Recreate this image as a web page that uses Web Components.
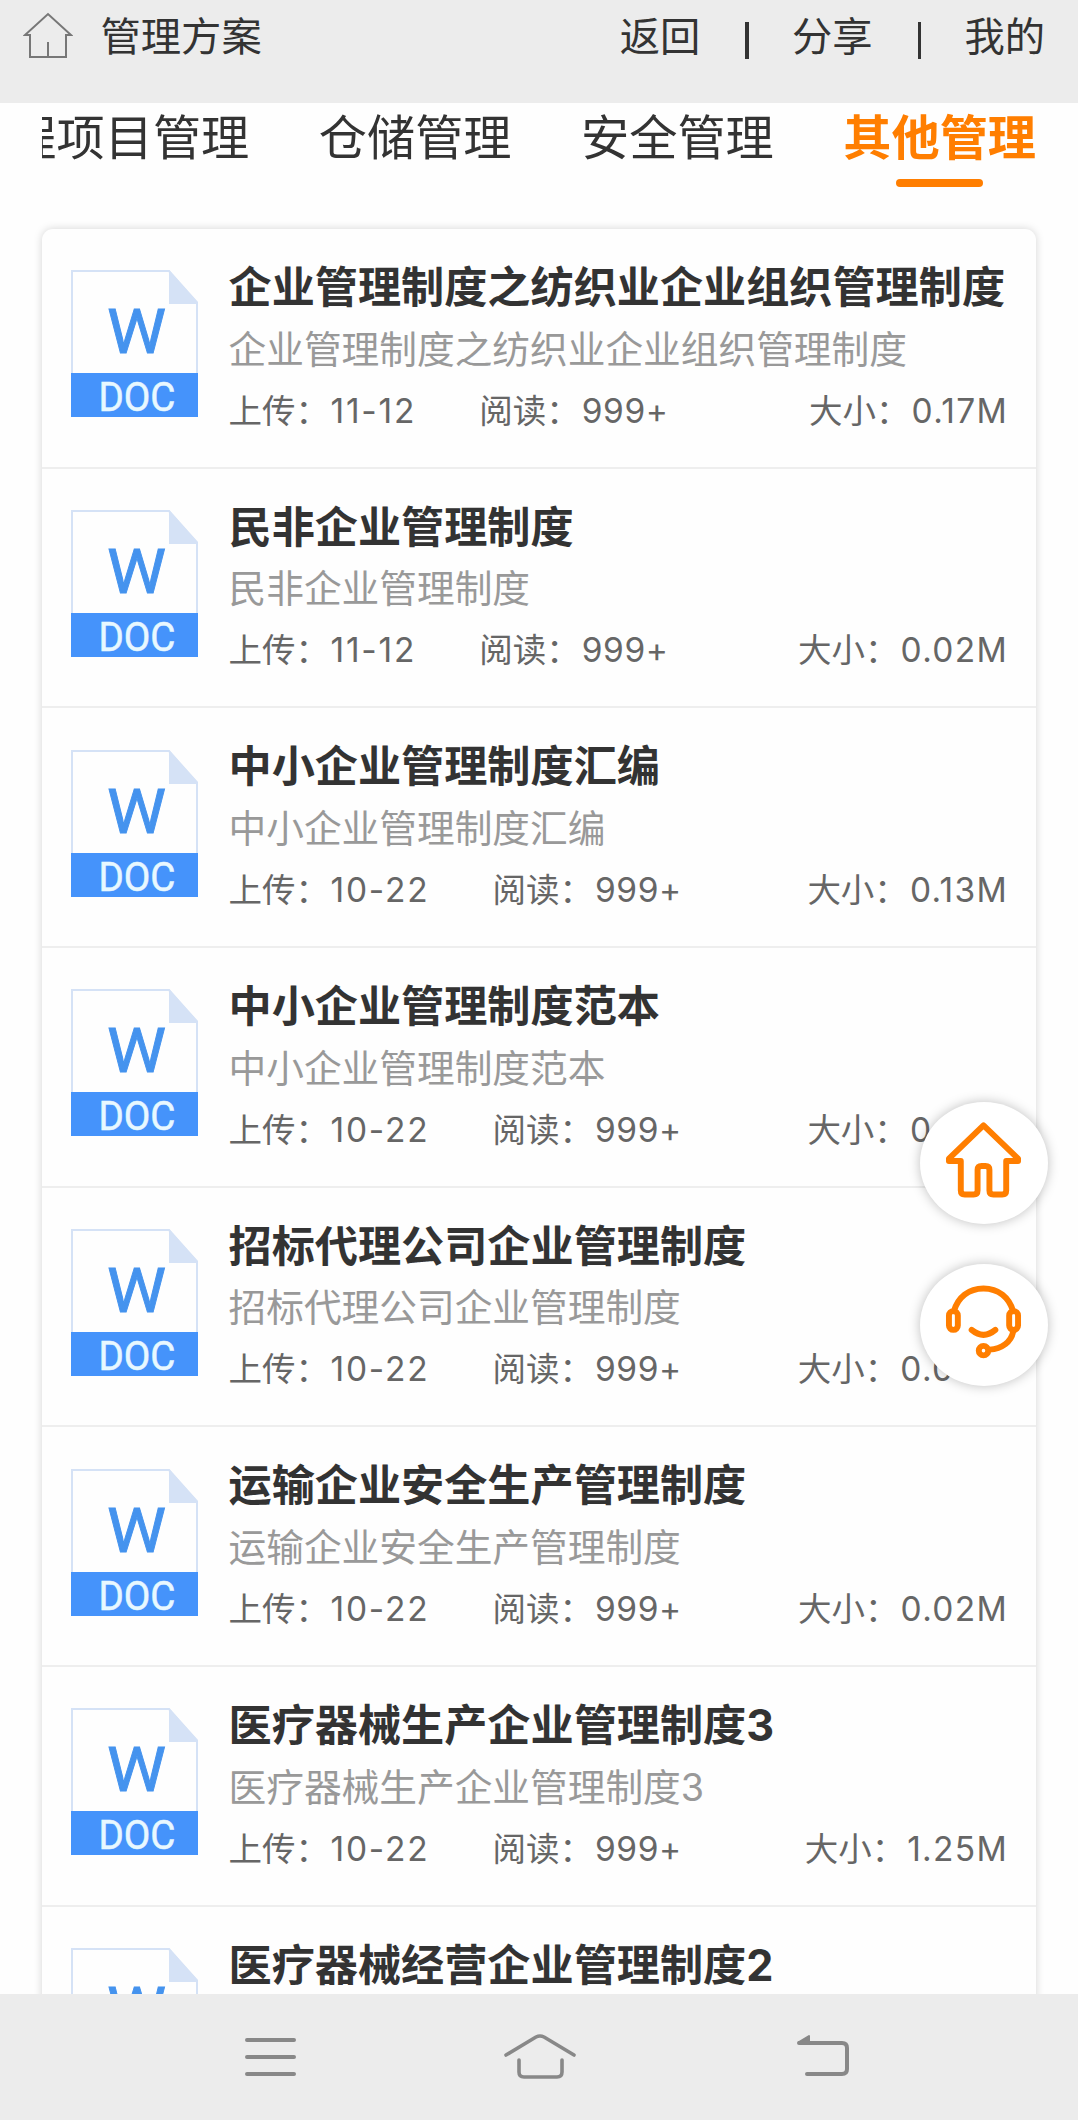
<!DOCTYPE html>
<html lang="zh-CN">
<head>
<meta charset="utf-8">
<title>管理方案</title>
<style>
  html, body {
    margin: 0;
    height: 100%;
    overflow: hidden;
    background: #fefefe;
    color: #333;
    font-family: Inter, "Noto Sans CJK SC", sans-serif;
  }
</style>
</head>
<body>
<doc-app></doc-app>

<script>
const docs = [
  { title: '企业管理制度之纺织业企业组织管理制度', date: '11-12', size: '0.17M' },
  { title: '民非企业管理制度', date: '11-12', size: '0.02M' },
  { title: '中小企业管理制度汇编', date: '10-22', size: '0.13M' },
  { title: '中小企业管理制度范本', date: '10-22', size: '0.13M' },
  { title: '招标代理公司企业管理制度', date: '10-22', size: '0.03M' },
  { title: '运输企业安全生产管理制度', date: '10-22', size: '0.02M' },
  { title: '医疗器械生产企业管理制度3', date: '10-22', size: '1.25M' },
  { title: '医疗器械经营企业管理制度2' },
];

// attach an open shadow root filled with markup
function define(name, html, setup) {
  const template = document.createElement('template');
  template.innerHTML = html;

  window.customElements.define(
    name,
    class extends HTMLElement {
      constructor() {
        super();
        this.attachShadow({ mode: 'open' });
        this.shadowRoot.appendChild(template.content.cloneNode(true));
      }

      connectedCallback() {
        if (setup) setup(this, this.shadowRoot);
      }
    }
  );
}

define('top-bar', `
  <style>
    :host {
      display: flex;
      flex: none;
      box-sizing: border-box;
      height: 103px;
      padding: 0 33px 30px 23px;
      align-items: center;
      background: #ececec;
      font-size: 40.3px;
      line-height: 72px;
    }
    svg { flex: none; margin: 0 27.5px 2px 0; }
    .title { flex: 1; }
    nav { display: flex; align-items: center; }
    i { width: 3.5px; height: 37px; margin: 7px 43.3px 0 45px; background: #333; }
  </style>
  <svg width="50" height="48" viewBox="0 0 50 48" fill="none" stroke="#777" stroke-width="2">
    <path d="M7 23H2L25 2l23 21h-5v22H7zM25 30v15"/>
  </svg>
  <span class="title"><slot></slot></span>
  <nav><span>返回</span><i></i><span>分享</span><i></i><span>我的</span></nav>
`);

define('tab-item', `
  <style>
    :host {
      position: relative;
      flex: none;
      font-size: 48.2px;
      line-height: 70px;
      white-space: nowrap;
    }
    :host([active]) { color: #ff7e00; font-weight: bold; }
    :host([active])::after {
      content: '';
      position: absolute;
      left: 50%;
      top: 76px;
      width: 87px;
      height: 7.5px;
      margin-left: -43.5px;
      border-radius: 4px;
      background: #ff7e00;
    }
  </style>
  <slot></slot>
`);

define('tab-strip', `
  <style>
    :host {
      display: flex;
      flex: none;
      justify-content: flex-end;
      gap: 69.5px;
      height: 126px;
      margin: 0 42px;
      overflow: hidden;
    }
  </style>
  <slot></slot>
`);

define('doc-icon', `
  <style>
    :host { display: block; flex: none; width: 127px; height: 147px; }
    svg { display: block; overflow: visible; }
    text { font-family: Roboto, sans-serif; }
  </style>
  <svg width="127" height="147" viewBox="0 0 127 147">
    <path d="M1 104V1h97l28 32v71" fill="#fefefe" stroke="#d5e2f6" stroke-width="2"/>
    <path d="M98 0v34h29v-2z" fill="#d5e2f6"/>
    <rect y="103" width="127" height="44" fill="#4593fb"/>
    <text x="36" y="82.500" font-size="61" textLength="59" lengthAdjust="spacingAndGlyphs" fill="#4593ee" stroke="#4593ee" stroke-width=".900">W</text>
    <text x="27.500" y="140.500" font-size="40" textLength="77" lengthAdjust="spacingAndGlyphs" fill="#e8f8ff" stroke="#e8f8ff" stroke-width=".5">DOC</text>
  </svg>
`);

define('doc-row', `
  <style>
    :host {
      display: flex;
      box-sizing: border-box;
      height: 239.7px;
      padding: 41.2px 28px 0 29px;
      border-bottom: 2px solid #eee;
    }
    .body { flex: 1; margin-left: 30.5px; white-space: nowrap; }
    .title { height: 60px; margin-top: -13.2px; font-size: 43.15px; line-height: 60px; font-weight: bold; }
    .desc { height: 60px; margin-top: 1.5px; font-size: 37.7px; line-height: 60px; color: #999; }
    .meta { display: flex; margin-top: 2px; font-size: 33.5px; line-height: 60px; color: #666; }
    .date b { margin-left: 1.5px; letter-spacing: 1.8px; }
    .reads { margin-left: 63px; }
    .reads b { margin-left: 2px; letter-spacing: .6px; }
    .size { margin-left: auto; }
    .size b { margin-left: 2px; letter-spacing: 1.3px; }
    b { font-weight: normal; }
  </style>
  <doc-icon></doc-icon>
  <div class="body">
    <div class="title"></div>
    <div class="desc"></div>
    <div class="meta">
      <span class="date">上传：<b></b></span>
      <span class="reads">阅读：<b>999+</b></span>
      <span class="size">大小：<b></b></span>
    </div>
  </div>
`, (el, root) => {
  const title = el.getAttribute('title-text');
  root.querySelector('.title').textContent = title;
  // rows without details only show their title
  if (!el.hasAttribute('date')) {
    root.querySelector('.meta').remove();
    return;
  }
  root.querySelector('.desc').textContent = title;
  root.querySelector('.date b').textContent = el.getAttribute('date');
  root.querySelector('.size b').textContent = el.getAttribute('size');
});

define('doc-list', `
  <style>
    :host {
      display: block;
      flex: none;
      margin: 0 42px;
      border-radius: 11px;
      background: #fefefe;
      box-shadow: 0 0 8px rgba(0, 0, 0, .17);
    }
  </style>
`, (el, root) => {
  docs.forEach((d) => {
    const row = document.createElement('doc-row');
    row.setAttribute('title-text', d.title);
    if (d.date) {
      row.setAttribute('date', d.date);
      row.setAttribute('size', d.size);
    }
    root.appendChild(row);
  });
});

define('float-buttons', `
  <style>
    :host {
      position: fixed;
      left: 919.500px;
      top: 1102px;
      display: flex;
      flex-direction: column;
      gap: 40px;
    }
    .btn {
      display: flex;
      align-items: center;
      justify-content: center;
      box-sizing: border-box;
      width: 128px;
      height: 122px;
      padding: 0 0 6px;
      border-radius: 50%;
      background: #fff;
      box-shadow: 0 0 12px rgba(0, 0, 0, .25);
    }
    svg { fill: none; stroke: #ff7e00; stroke-width: 6; stroke-linecap: round; stroke-linejoin: round; }
  </style>
  <div class="btn">
    <svg width="77" height="78" viewBox="0 0 78 78">
      <path d="M39 4L4 37.500v2.500h12V70q0 4 4 4h9q4 0 4-4V49q0-4 4-4h4q4 0 4 4v21q0 4 4 4h9q4 0 4-4V40h12v-2.500z"/>
    </svg>
  </div>
  <div class="btn">
    <svg width="77" height="78" viewBox="0 0 78 78">
      <path d="M9 28C13 14 24 5 39 5s26 9 30 23M69 49c-2 10-11 17-24 18M27 47q12 10 24 0"/>
      <rect x="4" y="28" width="9" height="19" rx="4.500"/>
      <rect x="65" y="28" width="9" height="19" rx="4.500"/>
      <circle cx="39" cy="68" r="4.800"/>
    </svg>
  </div>
`);

define('system-nav', `
  <style>
    :host {
      display: flex;
      flex: none;
      position: relative;
      box-sizing: border-box;
      height: 126px;
      padding: 0 228px 0 244px;
      align-items: center;
      justify-content: space-between;
      background: #ececec;
    }
    svg { fill: none; stroke: #888; stroke-width: 4; stroke-linecap: round; stroke-linejoin: round; }
    .home { margin-right: 12px; }
  </style>
  <svg width="52" height="50" viewBox="0 0 52 50"><path d="M3 8h47M3 25h47M3 42h47"/></svg>
  <svg class="home" width="72" height="50" viewBox="0 0 72 50">
    <path d="M2 23L32 5q4-2 8 0l30 18M15 28v12q0 5 5 5h33q5 0 5-5V28" stroke-width="3.600"/>
  </svg>
  <svg width="54" height="50" viewBox="0 0 54 50">
    <path d="M3 11h43q5 0 5 5v21q0 5-5 5H11"/>
    <path d="M3 10l10-6v7H3z" fill="#888" stroke-width="2"/>
  </svg>
`);

define('doc-app', `
  <style>
    :host { display: flex; flex-direction: column; height: 2120px; overflow: hidden; }
    main { display: flex; flex: 1; flex-direction: column; min-height: 0; overflow: hidden; }
  </style>
  <top-bar>管理方案</top-bar>
  <main>
    <tab-strip>
      <tab-item>程项目管理</tab-item>
      <tab-item>仓储管理</tab-item>
      <tab-item>安全管理</tab-item>
      <tab-item active>其他管理</tab-item>
    </tab-strip>
    <doc-list></doc-list>
  </main>
  <system-nav></system-nav>
  <float-buttons></float-buttons>
`);
</script>
</body>
</html>
